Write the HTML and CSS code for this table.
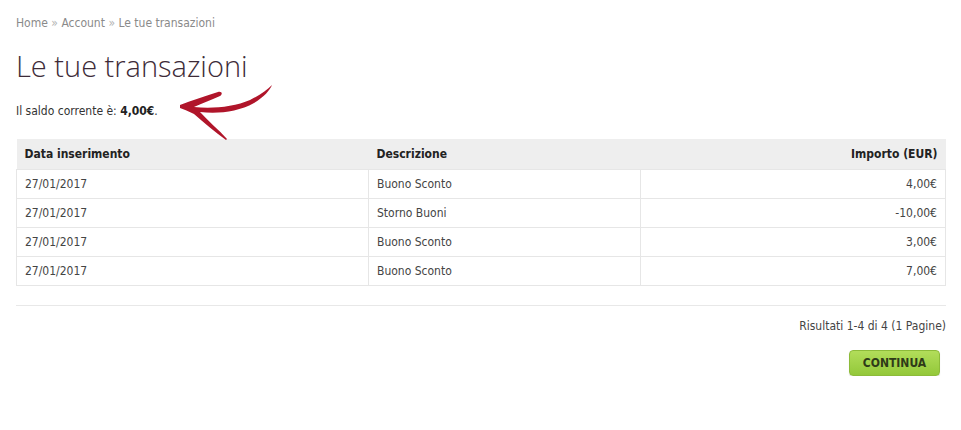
FILE: index.html
```html
<!DOCTYPE html>
<html lang="it">
<head>
<meta charset="utf-8">
<title>Le tue transazioni</title>
<link rel="stylesheet" href="styles.css">
</head>
<body>
<div class="page">
  <div class="breadcrumb"><a href="#">Home</a> <span class="sep">»</span> <a href="#">Account</a> <span class="sep">»</span> <a href="#">Le tue transazioni</a></div>
  <h1 class="title">Le tue transazioni</h1>
  <div class="balance-row">
    <p class="balance">Il saldo corrente è: <b>4,00€</b>.</p>
    <svg class="arrow" width="100" height="60" viewBox="0 0 100 60" aria-hidden="true">
      <path d="M2 22 C14 17 28 13 40 9 C44 8 45 11 42 13 C34 17 24 20 16 24 C34 26 56 24 72 17 C82 12 89 7 94 2 C92 7 86 14 76 20 C60 29 40 31 22 29 C30 38 40 46 49 56 L48 57 C36 48 26 40 16 31 C10 28 5 26 2 25 Z" fill="#b0152a"/>
    </svg>
  </div>
  <table class="tx">
    <thead>
      <tr><th class="c1">Data inserimento</th><th class="c2">Descrizione</th><th class="c3">Importo (EUR)</th></tr>
    </thead>
    <tbody>
      <tr><td>27/01/2017</td><td>Buono Sconto</td><td class="num">4,00€</td></tr>
      <tr><td>27/01/2017</td><td>Storno Buoni</td><td class="num">-10,00€</td></tr>
      <tr><td>27/01/2017</td><td>Buono Sconto</td><td class="num">3,00€</td></tr>
      <tr><td>27/01/2017</td><td>Buono Sconto</td><td class="num">7,00€</td></tr>
    </tbody>
  </table>
  <div class="divider"></div>
  <div class="results">Risultati 1-4 di 4 (1 Pagine)</div>
  <div class="actions"><a href="#" class="btn">CONTINUA</a></div>
</div>
</body>
</html>
```
FILE: styles.css
```css
* { box-sizing: border-box; }
body {
  margin: 0;
  background: #fff;
  font-family: "DejaVu Sans Condensed", "DejaVu Sans", sans-serif;
  font-size: 12px;
  color: #333;
}
.page { padding: 15px 15px 0 16px; }
.breadcrumb { color: #8a8a8a; line-height: 16px; }
.breadcrumb a { color: #8a8a8a; text-decoration: none; }
.breadcrumb .sep { color: #b5b5b5; }
.title {
  margin: 17px 0 0;
  font-family: "Open Sans", sans-serif;
  font-weight: 300;
  font-size: 29px;
  line-height: 36px;
  color: #3d2b38;
}
.balance-row { display: flex; align-items: flex-start; height: 55px; }
.balance { margin: 19px 0 0; line-height: 16px; color: #333; }
.balance b { color: #222; }
.arrow { margin: -1px 0 0 20px; }
.tx {
  width: 930px;
  border-collapse: collapse;
  table-layout: fixed;
}
.tx th {
  background: #eeeeee;
  height: 30px;
  padding: 0 8px;
  text-align: left;
  font-weight: bold;
  color: #222;
}
.tx th.c1 { width: 352px; }
.tx th.c2 { width: 272px; }
.tx th.c3 { text-align: right; }
.tx td {
  height: 29px;
  padding: 0 8px;
  border: 1px solid #e6e6e6;
  color: #444;
}
.tx td.num { text-align: right; }
.divider { width: 930px; height: 1px; background: #e8e8e8; margin-top: 19px; }
.results { width: 930px; text-align: right; margin-top: 12px; line-height: 16px; color: #444; }
.actions { width: 924px; display: flex; justify-content: flex-end; margin-top: 16px; }
.btn {
  display: block;
  width: 91px;
  height: 26px;
  line-height: 24px;
  text-align: center;
  border-radius: 4px;
  border: 1px solid #8dbb3a;
  background: linear-gradient(#b2dd5a, #93c83a);
  color: #2e3a18;
  font-weight: bold;
  font-size: 12px;
  text-decoration: none;
  box-shadow: 0 1px 1px rgba(0,0,0,0.15);
}
```
